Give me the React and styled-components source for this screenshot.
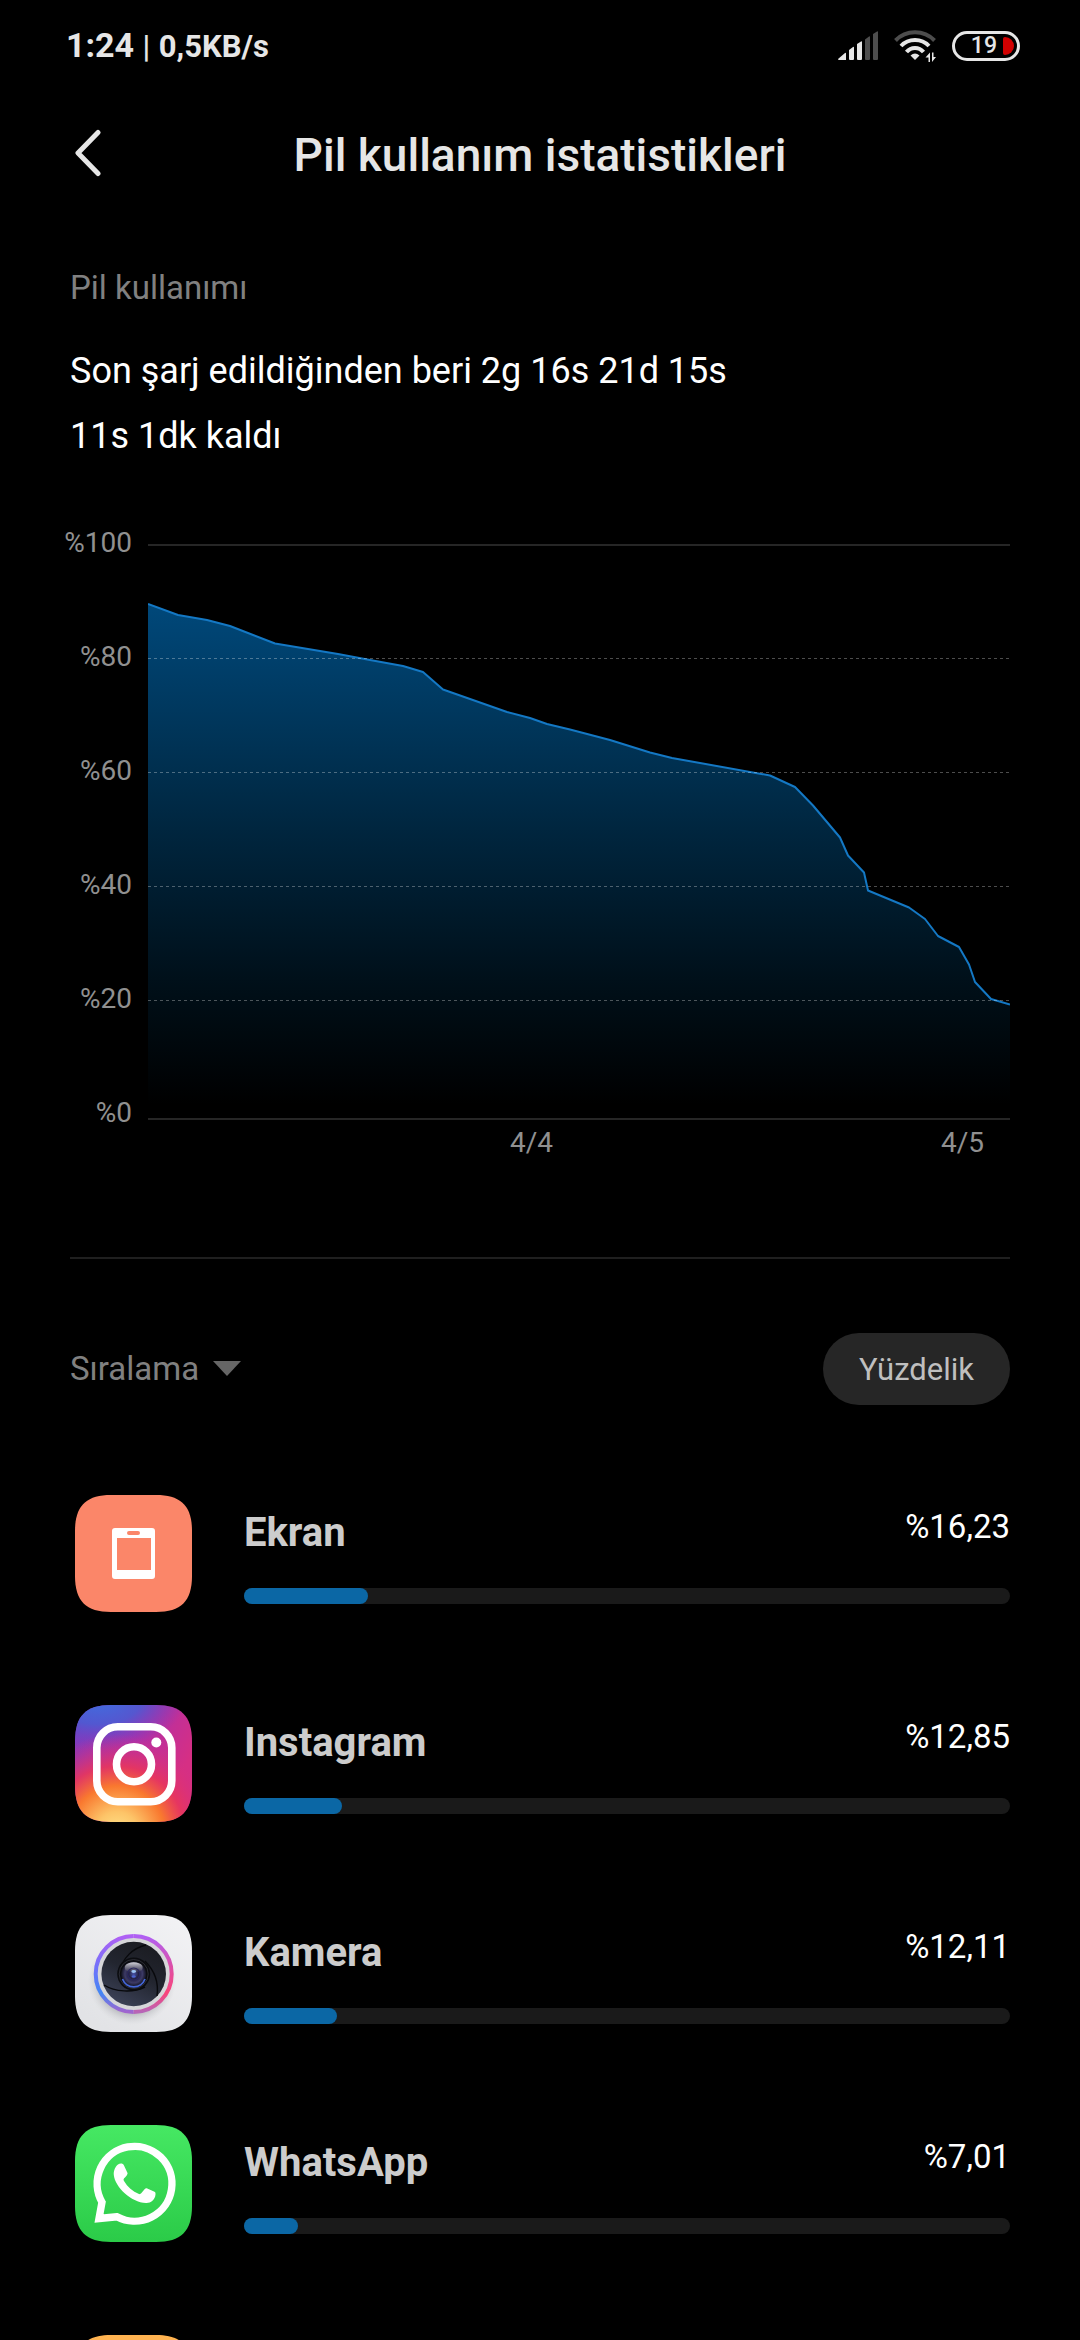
import React from "react";
import styled, { createGlobalStyle } from "styled-components";

const SQUIRCLE =
  "M36 0H81C106 0 117 11 117 36V81C117 106 106 117 81 117H36C11 117 0 106 0 81V36C0 11 11 0 36 0Z";

// plot area is 862 x 576, y = 0 is %100
const BATTERY_POINTS = [
  [0, 60], [30, 71], [59, 76], [82, 82], [127, 99.5], [190, 110], [222, 116],
  [255, 122], [275, 128], [295, 145.5], [359, 168], [382, 174], [399, 180],
  [422, 185.5], [462, 196], [502, 208.5], [524, 214], [622, 231.5],
  [647, 243], [665, 261.5], [692, 293.5], [700, 311.5], [716, 328.5],
  [720, 346.5], [761, 363.5], [777, 375], [790, 392], [811, 403],
  [821, 420.5], [827, 438], [843, 455], [862, 460.5],
];

const LEVELS = ["%100", "%80", "%60", "%40", "%20", "%0"];
const GRID_LINES = [114.5, 228.5, 342.5, 456.5];

const BatteryChart = () => {
  const line = BATTERY_POINTS.map((p) => p.join(" ")).join("L");
  return (
    <Chart>
      <Levels>
        {LEVELS.map((level) => (
          <Level key={level}>{level}</Level>
        ))}
      </Levels>
      <Plot>
        <PlotSvg viewBox="0 0 862 576" preserveAspectRatio="none" aria-hidden="true">
          <defs>
            <linearGradient id="fill" gradientUnits="userSpaceOnUse" x1="0" y1="60" x2="0" y2="560">
              <stop offset="0" stopColor="#00487a" />
              <stop offset="0.45" stopColor="#00263f" />
              <stop offset="0.75" stopColor="#00101a" />
              <stop offset="1" stopColor="#000000" />
            </linearGradient>
          </defs>
          <path d={`M0 576L${line}L862 576Z`} fill="url(#fill)" />
          <path
            d={`M${line}`}
            fill="none"
            stroke="#1478c4"
            strokeWidth="2"
            strokeLinejoin="round"
          />
          {GRID_LINES.map((y) => (
            <path
              key={y}
              d={`M0 ${y}H862`}
              stroke="#ffffff"
              strokeOpacity="0.3"
              strokeDasharray="3 3"
            />
          ))}
          <path d="M0 1H862M0 575H862" stroke="#262626" strokeWidth="2" />
        </PlotSvg>
        <Days>
          <Day width="89%">4/4</Day>
          <Day width="11%">4/5</Day>
        </Days>
      </Plot>
    </Chart>
  );
};

const ScreenIcon = () => (
  <AppIcon viewBox="0 0 117 117" aria-hidden="true">
    <path d={SQUIRCLE} fill="#fb8669" />
    <path
      fill="#ffffff"
      fillRule="evenodd"
      d="M40 33H77Q80 33 80 36V81Q80 84 77 84H40Q37 84 37 81V36Q37 33 40 33ZM42 43V75H76V43ZM54 36Q52 36 52 38T54 40H63Q65 40 65 38T63 36Z"
    />
  </AppIcon>
);

const InstagramIcon = () => (
  <AppIcon viewBox="0 0 117 117" aria-hidden="true">
    <defs>
      <linearGradient id="igBase" x1="0" y1="0.1" x2="0.9" y2="0.6">
        <stop offset="0" stopColor="#7a3cc0" />
        <stop offset="0.5" stopColor="#b02fa8" />
        <stop offset="1" stopColor="#d62f84" />
      </linearGradient>
      <radialGradient id="igBlue" cx="0.2" cy="-0.1" r="0.75" gradientTransform="scale(1 0.6)">
        <stop offset="0" stopColor="#3f6fe0" />
        <stop offset="0.5" stopColor="#4c5bd3" stopOpacity="0.9" />
        <stop offset="1" stopColor="#6c40c8" stopOpacity="0" />
      </radialGradient>
      <radialGradient id="igWarm" cx="0.36" cy="1.1" r="0.85">
        <stop offset="0" stopColor="#ffe58c" />
        <stop offset="0.22" stopColor="#fdc468" />
        <stop offset="0.48" stopColor="#f9782f" />
        <stop offset="0.68" stopColor="#e8365c" stopOpacity="0.9" />
        <stop offset="1" stopColor="#d42f87" stopOpacity="0" />
      </radialGradient>
    </defs>
    <path d={SQUIRCLE} fill="url(#igBase)" />
    <path d={SQUIRCLE} fill="url(#igBlue)" />
    <path d={SQUIRCLE} fill="url(#igWarm)" />
    <g fill="none" stroke="#ffffff" strokeWidth="7.6">
      <rect x="21.8" y="21.8" width="75" height="75" rx="21" />
      <circle cx="59" cy="59.3" r="17.5" />
    </g>
    <circle cx="81.3" cy="37.5" r="5" fill="#ffffff" />
  </AppIcon>
);

const CameraIcon = () => (
  <AppIcon viewBox="0 0 117 117" aria-hidden="true">
    <defs>
      <linearGradient id="camBody" x1="1" y1="0" x2="0.3" y2="1">
        <stop offset="0" stopColor="#f3f3f5" />
        <stop offset="1" stopColor="#e2e3e6" />
      </linearGradient>
      <radialGradient id="camShadow">
        <stop offset="0.7" stopColor="#8e9096" stopOpacity="0.6" />
        <stop offset="1" stopColor="#c9cacd" stopOpacity="0" />
      </radialGradient>
      <linearGradient id="camLeft" x1="0" y1="0" x2="0" y2="1">
        <stop offset="0" stopColor="#b060f4" />
        <stop offset="0.45" stopColor="#6b74fa" />
        <stop offset="0.75" stopColor="#4386f4" />
        <stop offset="1" stopColor="#a165cf" />
      </linearGradient>
      <linearGradient id="camRight" x1="0" y1="0" x2="0" y2="1">
        <stop offset="0" stopColor="#b060f4" />
        <stop offset="0.4" stopColor="#dd4fa8" />
        <stop offset="0.75" stopColor="#fa447a" />
        <stop offset="1" stopColor="#b765b8" />
      </linearGradient>
      <linearGradient id="camBlades" x1="0.8" y1="0" x2="0.3" y2="1">
        <stop offset="0" stopColor="#1a1b20" />
        <stop offset="0.5" stopColor="#22252f" />
        <stop offset="1" stopColor="#3c4258" />
      </linearGradient>
      <radialGradient id="camLens" cx="0.5" cy="0.5" r="0.5">
        <stop offset="0" stopColor="#4a55a8" />
        <stop offset="0.4" stopColor="#23203f" />
        <stop offset="0.7" stopColor="#3c3a66" />
        <stop offset="1" stopColor="#10111c" />
      </radialGradient>
      <linearGradient id="camGloss" x1="0" y1="0" x2="0" y2="1">
        <stop offset="0" stopColor="#d9d9df" />
        <stop offset="1" stopColor="#4a4858" stopOpacity="0.5" />
      </linearGradient>
    </defs>
    <path d={SQUIRCLE} fill="url(#camBody)" />
    <circle cx="57" cy="66" r="44" fill="url(#camShadow)" />
    <circle cx="58.7" cy="59" r="38" fill="#d6d6d9" />
    <path d="M58.7 21A38 38 0 0 0 58.7 97" fill="none" stroke="url(#camLeft)" strokeWidth="4" />
    <path d="M58.7 21A38 38 0 0 1 58.7 97" fill="none" stroke="url(#camRight)" strokeWidth="4" />
    <circle cx="58.7" cy="59" r="32.3" fill="url(#camBlades)" />
    <g fill="none" stroke="#08090c" strokeWidth="1.4">
      <path d="M71 30C58 33 47 43 45 57" />
      <path d="M70 46C79 55 84 67 82 81" />
      <path d="M29 70C40 77 58 78 70 72" />
    </g>
    <circle cx="58.7" cy="59" r="16.5" fill="#0b0c10" />
    <circle cx="58.7" cy="59" r="14.5" fill="none" stroke="#34353d" strokeWidth="0.8" />
    <circle cx="58.7" cy="59" r="12.6" fill="url(#camLens)" />
    <path d="M47.5 64A12 12 0 0 0 70 64" fill="none" stroke="#4567d8" strokeWidth="1.8" />
    <path
      d="M50 51C53 46 64.4 46 67.4 51C68.4 55 66 56 62 57H55.4C51.4 56 49 55 50 51Z"
      fill="url(#camGloss)"
    />
    <circle cx="58.7" cy="59" r="6" fill="none" stroke="#2b2960" strokeWidth="1.2" />
    <ellipse cx="58.7" cy="56.5" rx="2.4" ry="1.4" fill="#9dc4f4" />
    <ellipse cx="58.7" cy="61.5" rx="2" ry="1.2" fill="#4c63cf" />
  </AppIcon>
);

const WhatsAppIcon = () => (
  <AppIcon viewBox="0 0 117 117" aria-hidden="true">
    <defs>
      <linearGradient id="waBody" x1="0" y1="0" x2="0" y2="1">
        <stop offset="0" stopColor="#46e863" />
        <stop offset="1" stopColor="#2bcb48" />
      </linearGradient>
    </defs>
    <path d={SQUIRCLE} fill="url(#waBody)" />
    <path
      d="M42 91.8L24 93.5L27 77.2A37.4 37.4 0 1 1 42 91.8Z"
      fill="none"
      stroke="#ffffff"
      strokeWidth="7.4"
    />
    <path
      fill="#ffffff"
      d="M43 39.5C45 38 48 38 49 40.5L52.5 48C53 49.5 50 52.5 49 53.5C48.3 54.5 48.5 55 49 56C52.5 62 57.5 66.5 64 69C65 69.4 65.5 69 66.2 68.3L70 63.8C70.6 63 71.4 63 72.3 63.4L79.5 66.8C80.5 67.4 80.6 68 80.5 69.5C80 75 75.5 78.3 71 78C56 77.5 40 62 38.8 50C38.4 45.5 40.5 41.5 43 39.5Z"
    />
  </AppIcon>
);

const OrangeIcon = () => (
  <AppIcon viewBox="0 0 117 117" aria-hidden="true">
    <path d={SQUIRCLE} fill="#ffb351" />
  </AppIcon>
);

const APPS = [
  { name: "Ekran", label: "%16,23", value: 16.23, Icon: ScreenIcon },
  { name: "Instagram", label: "%12,85", value: 12.85, Icon: InstagramIcon },
  { name: "Kamera", label: "%12,11", value: 12.11, Icon: CameraIcon },
  { name: "WhatsApp", label: "%7,01", value: 7.01, Icon: WhatsAppIcon },
];

const StatusIcons = () => (
  <StatusGroup>
    <svg width="40" height="30" viewBox="0 0 40 30" aria-hidden="true">
      <path
        fill="#e6e6e6"
        d="M0 28L7 22Q8 21.5 8 22.5V29H1Q0 29 0 28ZM11 19L15 16Q16 15.5 16 16.5V28Q16 29 15 29H12Q11 29 11 28ZM19 13L23 10.5Q24 10 24 11V28Q24 29 23 29H20Q19 29 19 28Z"
      />
      <path
        fill="#4d4d4d"
        d="M27 8.5L31 5.5Q32 5 32 6V28Q32 29 31 29H28Q27 29 27 28ZM35 3L39 0.5Q40 0 40 1V28Q40 29 39 29H36Q35 29 35 28Z"
      />
    </svg>
    <svg width="42" height="34" viewBox="0 0 42 34" aria-hidden="true">
      <g fill="none" strokeWidth="4">
        <path d="M1.5 11.5C12 0.5 30 0.5 40.5 11.5" stroke="#4d4d4d" />
        <path d="M7 17C14.500 9 27.500 9 35 17" stroke="#e6e6e6" />
        <path d="M12.5 23C17 17.5 25 17.5 29.5 23" stroke="#e6e6e6" />
      </g>
      <path d="M21 31L16.5 26.5Q21 22.5 25.5 26.5Z" fill="#e6e6e6" />
      <path d="M36 33H34.5V28.5H31.5L36 23.5ZM38 23.5H39.500V28L42 28L38 33Z" fill="#e6e6e6" />
    </svg>
    <Battery>
      19
      <BatteryLevel />
    </Battery>
  </StatusGroup>
);

const App = () => {
  return (
    <>
      <GlobalStyle />
      <Page>
        <StatusBar>
          <Clock>
            1:24 <Separator>|</Separator> <Speed>0,5KB/s</Speed>
          </Clock>
          <StatusIcons />
        </StatusBar>
        <Header>
          <BackButton aria-label="Geri">
            <svg width="28" height="48" viewBox="0 0 28 48" aria-hidden="true">
              <path
                d="M24 3.5L4 24L24 44.5"
                fill="none"
                stroke="#e6e6e6"
                strokeWidth="5"
                strokeLinecap="round"
                strokeLinejoin="round"
              />
            </svg>
          </BackButton>
          <Title>Pil kullanım istatistikleri</Title>
        </Header>
        <Content>
          <SectionTitle>Pil kullanımı</SectionTitle>
          <Summary>
            Son şarj edildiğinden beri 2g 16s 21d 15s
            <br />
            11s 1dk kaldı
          </Summary>
          <BatteryChart />
          <Divider />
          <Toolbar>
            <SortButton>
              Sıralama
              <svg width="28" height="16" viewBox="0 0 28 16" aria-hidden="true">
                <path d="M0 0H28L14 15Z" fill="#666666" />
              </svg>
            </SortButton>
            <ModeButton>Yüzdelik</ModeButton>
          </Toolbar>
          <AppList>
            {APPS.map(({ name, label, value, Icon }) => (
              <AppRow key={name}>
                <Icon />
                <AppBody>
                  <AppHead>
                    <AppName>{name}</AppName>
                    <Percent>{label}</Percent>
                  </AppHead>
                  <Track>
                    <Fill style={{ width: `${value}%` }} />
                  </Track>
                </AppBody>
              </AppRow>
            ))}
            <AppRow>
              <OrangeIcon />
            </AppRow>
          </AppList>
        </Content>
      </Page>
    </>
  );
};

const GlobalStyle = createGlobalStyle`
  * {
    box-sizing: border-box;
  }
  body {
    margin: 0;
    background-color: #000000;
    font-family: Roboto, "Noto Sans", sans-serif;
  }
  h1, h2, p, ul {
    margin: 0;
    padding: 0;
  }
  button {
    padding: 0;
    border: none;
    background: none;
    font-family: inherit;
    cursor: pointer;
  }
`;

const Page = styled.div`
  height: 100vh;
  overflow: hidden;
  background-color: #000000;
  color: #ffffff;
`;

const StatusBar = styled.div`
  display: flex;
  align-items: center;
  justify-content: space-between;
  height: 92px;
  padding: 0 60px 0 66px;
`;

const Clock = styled.div`
  color: #e6e6e6;
  font-size: 34px;
  line-height: 40px;
  font-weight: 700;
`;

const Separator = styled.span`
  font-size: 31px;
  font-weight: 500;
`;

const Speed = styled.span`
  font-size: 31px;
`;

const StatusGroup = styled.div`
  display: flex;
  align-items: center;
  gap: 16px;
`;

const Battery = styled.div`
  display: flex;
  align-items: center;
  justify-content: flex-end;
  gap: 6px;
  width: 68px;
  height: 30px;
  padding-right: 3px;
  border: 3px solid #e6e6e6;
  border-radius: 15px;
  color: #e6e6e6;
  font-size: 23px;
  line-height: 24px;
  font-weight: 500;
`;

const BatteryLevel = styled.span`
  width: 11px;
  height: 18px;
  border-radius: 2px 9px 9px 2px;
  background-color: #d10000;
`;

const Header = styled.header`
  display: grid;
  grid-template-columns: 48px 1fr 48px;
  align-items: center;
  height: 126px;
  padding: 0 70px;
`;

const BackButton = styled.button`
  display: flex;
  padding: 0 0 4px 4px;
`;

const Title = styled.h1`
  color: #e6e6e6;
  font-size: 46px;
  line-height: 56px;
  font-weight: 500;
  text-align: center;
`;

const Content = styled.main`
  padding: 46px 70px 0;
`;

const SectionTitle = styled.h2`
  color: #808080;
  font-size: 33px;
  line-height: 48px;
  font-weight: 400;
`;

const Summary = styled.p`
  margin-top: 27px;
  font-size: 36px;
  line-height: 65px;
`;

const Chart = styled.section`
  display: grid;
  grid-template-columns: 62px 1fr;
  gap: 16px;
  margin-top: 57px;
`;

const Levels = styled.div`
  display: flex;
  flex-direction: column;
  align-items: flex-end;
  gap: 80px;
`;

const Level = styled.span`
  color: #909090;
  font-size: 28px;
  line-height: 34px;
`;

const Plot = styled.div`
  padding-top: 18px;
`;

const PlotSvg = styled.svg`
  display: block;
  width: 100%;
  height: 576px;
`;

const Days = styled.div`
  display: flex;
  margin-top: 5px;
`;

const Day = styled.span`
  width: ${(props) => props.width};
  color: #909090;
  font-size: 28px;
  line-height: 36px;
  text-align: center;
`;

const Divider = styled.div`
  height: 2px;
  margin-top: 96px;
  background-color: #1f1f1f;
`;

const Toolbar = styled.div`
  display: flex;
  align-items: center;
  justify-content: space-between;
  margin-top: 74px;
`;

const SortButton = styled.button`
  display: flex;
  align-items: center;
  gap: 14px;
  color: #808080;
  font-size: 33px;
  line-height: 48px;
`;

const ModeButton = styled.button`
  height: 72px;
  padding: 0 36px;
  border-radius: 36px;
  background-color: #262626;
  color: #bfbfbf;
  font-size: 31px;
`;

const AppList = styled.ul`
  margin-top: 90px;
  list-style: none;
`;

const AppRow = styled.li`
  display: flex;
  gap: 52px;
  height: 210px;
  padding-left: 5px;
`;

const AppIcon = styled.svg`
  flex: none;
  width: 117px;
  height: 117px;
`;

const AppBody = styled.div`
  flex: 1;
  padding-top: 14px;
`;

const AppHead = styled.div`
  display: flex;
  align-items: flex-start;
  justify-content: space-between;
`;

const AppName = styled.span`
  color: #cccccc;
  font-size: 40px;
  line-height: 48px;
  font-weight: 700;
`;

const Percent = styled.span`
  font-size: 33px;
  line-height: 36px;
`;

const Track = styled.div`
  height: 16px;
  margin-top: 31px;
  border-radius: 8px;
  background-color: #1a1a1a;
`;

const Fill = styled.div`
  height: 16px;
  border-radius: 8px;
  background-color: #0b67a5;
`;

export default App;
